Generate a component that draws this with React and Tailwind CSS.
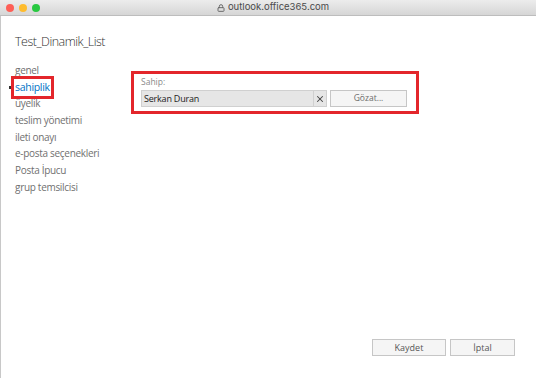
import { Lock, X } from 'lucide-react';

const navItems = [
  'genel',
  'sahiplik',
  'üyelik',
  'teslim yönetimi',
  'ileti onayı',
  'e-posta seçenekleri',
  'Posta İpucu',
  'grup temsilcisi',
];

const TitleBar = () => (
  <div className="relative flex h-4 shrink-0 items-center border-b border-[#bdbdbd] bg-gradient-to-b from-[#ececec] to-[#d6d6d6]">
    <div className="flex items-center gap-[5px] pl-[6px]">
      <span className="h-2 w-2 rounded-full bg-[#fe5f57]" />
      <span className="h-2 w-2 rounded-full bg-[#febc2e]" />
      <span className="h-2 w-2 rounded-full bg-[#28c840]" />
    </div>
    <div className="absolute inset-0 flex items-center justify-center gap-[3px] pl-[10px] text-[9.5px] text-[#4a4a4a]" style={{ fontFamily: 'Inter, "Liberation Sans", sans-serif' }}>
      <Lock size={8} strokeWidth={3} className="text-[#6a6a6a]" />
      <span>outlook.office365.com</span>
    </div>
  </div>
);

const App = () => {
  return (
    <div
      className="flex h-[378px] w-[536px] flex-col overflow-hidden bg-white"
      style={{ fontFamily: '"Open Sans", "Noto Sans", sans-serif' }}
    >
      <TitleBar />

      <div className="flex flex-1 flex-col border-l border-[#c8c8c8] pl-[14px] pr-[21px] pt-[17px] pb-[22px]">
        <h1 className="text-[12.5px] font-light leading-[18px] tracking-[-0.5px] text-[#333]">Test_Dinamik_List</h1>

        <div className="mt-[11px] flex items-start">
          {/* left nav */}
          <ul className="w-[116px] text-[10px] text-[#707070]">
            {navItems.map((item) => (
              <li key={item} className="relative h-[16.7px] leading-[16.7px] tracking-[-0.3px]">
                {item === 'sahiplik' ? (
                  <>
                    <span className="absolute left-[-6px] top-[7px] h-[3px] w-[2px] bg-[#333]" />
                    <span className="inline-block text-[10.5px] leading-[15px] text-[#0072c6] outline outline-[3px] outline-offset-[1px] outline-[#e3262b]">
                      {item}
                    </span>
                  </>
                ) : (
                  <span>{item}</span>
                )}
              </li>
            ))}
          </ul>

          {/* owner panel */}
          <div className="mt-[9px] flex h-[43px] w-[288px] flex-col border-[3px] border-[#e3262b] px-[7px] pt-[2px]">
            <span className="text-[8.5px] leading-[12px] text-[#8a8a8a]">Sahip:</span>
            <div className="mt-[2px] flex h-[17px] items-stretch">
              <div className="flex w-[172px] items-center border border-r-0 border-[#d0d0d0] bg-[#e6e6e6] pl-[2px] text-[9px] tracking-[-0.2px] text-[#222]">
                Serkan Duran
              </div>
              <div className="flex w-[14px] items-center justify-center border border-[#d0d0d0] bg-[#e6e6e6]">
                <X size={10} strokeWidth={2.5} className="text-[#444]" />
              </div>
              <button className="ml-[3px] w-[77px] border border-[#c6c6c6] bg-[#f5f5f5] text-[8.5px] text-[#6b6b6b]">
                Gözat...
              </button>
            </div>
          </div>
        </div>

        {/* footer */}
        <div className="mt-auto flex justify-end gap-[4px]">
          <button className="h-[17px] w-[74px] border border-[#c6c6c6] bg-[#f5f5f5] text-[9px] text-[#555]">Kaydet</button>
          <button className="h-[17px] w-[65px] border border-[#c6c6c6] bg-[#f5f5f5] text-[9px] text-[#555]">İptal</button>
        </div>
      </div>
    </div>
  );
};

export default App;
